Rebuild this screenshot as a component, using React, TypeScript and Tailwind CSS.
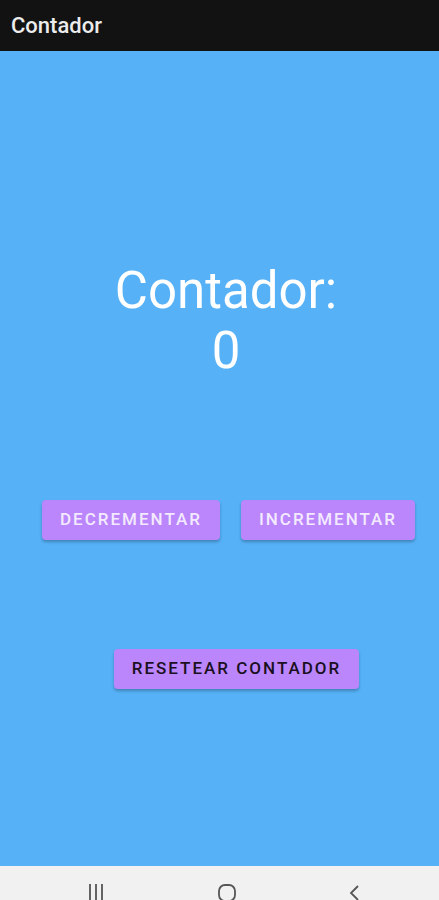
export default function App() {
  const font = { fontFamily: "Roboto, 'Liberation Sans', sans-serif" };
  return (
    <div className="flex h-[900px] w-[439px] flex-col overflow-hidden bg-[#56b1f7]" style={font}>
      <div className="flex h-[51px] shrink-0 items-center bg-[#121212] px-[11px]">
        <h1 className="text-[22px] font-medium text-[#ececec]">Contador</h1>
      </div>

      <main className="flex flex-1 flex-col items-center">
        <div className="mt-[210px] pl-[13px] text-center text-[51px] leading-[60px] text-white">
          <p>Contador:</p>
          <p>0</p>
        </div>

        <div className="mt-[119px] flex w-full justify-between pl-[42px] pr-[24px]">
          <button className="h-[40px] w-[178px] rounded-[4px] bg-[#bb86fc] text-[17px] font-medium tracking-[2px] text-[#f3eaff] shadow-[0_2px_3px_rgba(0,0,0,0.25)]">
            DECREMENTAR
          </button>
          <button className="h-[40px] w-[174px] rounded-[4px] bg-[#bb86fc] text-[17px] font-medium tracking-[2px] text-[#f3eaff] shadow-[0_2px_3px_rgba(0,0,0,0.25)]">
            INCREMENTAR
          </button>
        </div>

        <button className="mt-[109px] ml-[34px] h-[40px] w-[245px] rounded-[4px] bg-[#bb86fc] text-[17px] font-medium tracking-[2px] text-[#1a1020] shadow-[0_2px_3px_rgba(0,0,0,0.25)]">
          RESETEAR CONTADOR
        </button>
      </main>

      <nav className="flex h-[34px] shrink-0 items-start bg-[#f1f1f1] pt-[18px]">
        <svg width="18" height="18" viewBox="0 0 18 18" className="ml-[87px] text-[#555]">
          <path d="M3 0v18M9 0v18M15 0v18" stroke="currentColor" strokeWidth="1.8" />
        </svg>
        <svg width="20" height="18" viewBox="0 0 20 18" className="ml-[112px] text-[#555]">
          <rect x="2" y="1" width="16" height="16" rx="6" fill="none" stroke="currentColor" strokeWidth="1.8" />
        </svg>
        <svg width="14" height="18" viewBox="0 0 14 18" className="ml-[111px] text-[#555]">
          <path d="M10 2L3 9l7 7" fill="none" stroke="currentColor" strokeWidth="1.8" />
        </svg>
      </nav>
    </div>
  );
}
